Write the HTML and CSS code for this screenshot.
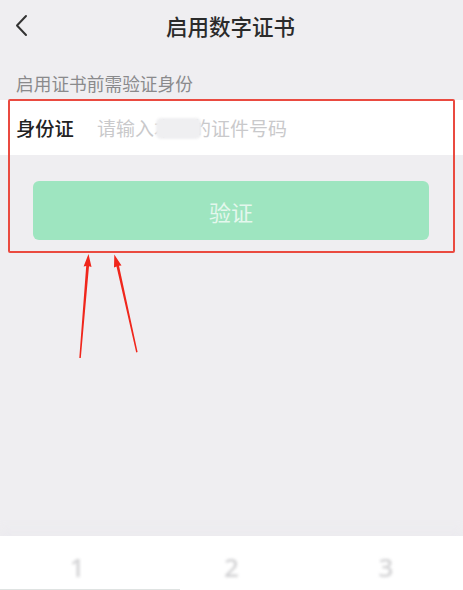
FILE: index.html
```html
<!DOCTYPE html>
<html lang="zh">
<head>
<meta charset="utf-8">
<title>启用数字证书</title>
<link rel="stylesheet" href="styles.css">
</head>
<body>
<div class="page">
  <header class="nav">
    <svg class="back" width="16" height="24" viewBox="0 0 16 24"><path d="M12 3 L3 12.5 L12 22" fill="none" stroke="#333" stroke-width="2" stroke-linecap="round" stroke-linejoin="round"/></svg>
    <h1 class="title">启用数字证书</h1>
  </header>
  <div class="hint">启用证书前需验证身份</div>
  <section class="verify">
    <div class="field">
      <span class="label">身份证</span>
      <span class="placeholder">请输入本人的证件号码<span class="blur"></span></span>
    </div>
    <div class="btn-wrap"><button class="btn">验证</button></div>
    <div class="mark"></div>
  </section>
  <svg class="arrows" width="463" height="590" viewBox="0 0 463 590">
    <g fill="#f0261c">
      <path d="M79.3 358 L86.2 266 L83.6 266.5 L88.5 254 L91.5 267 L89 266.3 L80.8 358 Z"/>
      <path d="M136.2 352.5 L116.5 266.5 L114 267.5 L114.3 254.5 L121.5 265.5 L119 265.8 L137.6 352 Z"/>
    </g>
  </svg>
  <div class="keypad">
    <span class="key">1</span>
    <span class="key">2</span>
    <span class="key">3</span>
    <div class="kb-line"></div>
  </div>
</div>
</body>
</html>
```
FILE: styles.css
```css
* { box-sizing: border-box; }
html, body { margin: 0; padding: 0; }
body {
  background: #efeef1;
  font-family: "Noto Sans CJK SC", "Noto Sans", sans-serif;
  width: 463px;
  height: 590px;
  overflow: hidden;
}
.page {
  position: relative;
  height: 590px;
  display: flex;
  flex-direction: column;
}
.nav {
  height: 52px;
  display: flex;
  align-items: center;
  justify-content: center;
  position: relative;
}
.back {
  position: absolute;
  left: 14px;
  top: 13px;
}
.title {
  margin: 0;
  font-size: 21.5px;
  font-weight: 500;
  color: #2b2b2b;
  line-height: 26px;
  position: relative;
  left: -1px;
}
.hint {
  height: 48px;
  display: flex;
  align-items: flex-end;
  padding: 0 0 7px 16px;
  font-size: 17.7px;
  line-height: 20px;
  color: #8a8a8c;
}
.verify {
  position: relative;
}
.field {
  height: 55px;
  background: #fff;
  display: flex;
  align-items: center;
  padding-left: 16px;
}
.label {
  font-size: 19.3px;
  color: #222;
  width: 81px;
  font-weight: 500;
}
.placeholder {
  position: relative;
  font-size: 19px;
  color: #c9c9cb;
}
.blur {
  position: absolute;
  left: 59px;
  top: 4px;
  width: 45px;
  height: 21px;
  background: #efeff1;
  border-radius: 5px;
  filter: blur(1px);
}
.btn-wrap {
  padding: 26px 34px 0 33px;
}
.btn {
  display: block;
  width: 100%;
  height: 59px;
  border: none;
  border-radius: 6px;
  background: #9ee5c0;
  color: #e4f7ed;
  font-family: inherit;
  font-size: 22px;
  padding: 0;
}
.mark {
  position: absolute;
  left: 8px;
  top: -1px;
  width: 447px;
  height: 154px;
  border: 2px solid #ea4a40;
  border-radius: 2px;
  pointer-events: none;
}
.arrows {
  position: absolute;
  left: 0;
  top: 0;
  pointer-events: none;
}
.keypad {
  margin-top: auto;
  height: 54px;
  background: #fff;
  box-shadow: 0 -6px 10px rgba(235, 234, 238, 0.9);
  display: grid;
  grid-template-columns: repeat(3, 1fr);
  align-items: center;
  justify-items: center;
  position: relative;
}
.key {
  font-family: "Noto Sans", sans-serif;
  font-size: 26px;
  font-weight: 500;
  color: #d0d0d2;
  filter: blur(1.6px);
  position: relative;
  top: 4px;
}
.kb-line {
  position: absolute;
  left: 0;
  bottom: 0;
  width: 180px;
  height: 1px;
  background: #dfe3e2;
}
```
